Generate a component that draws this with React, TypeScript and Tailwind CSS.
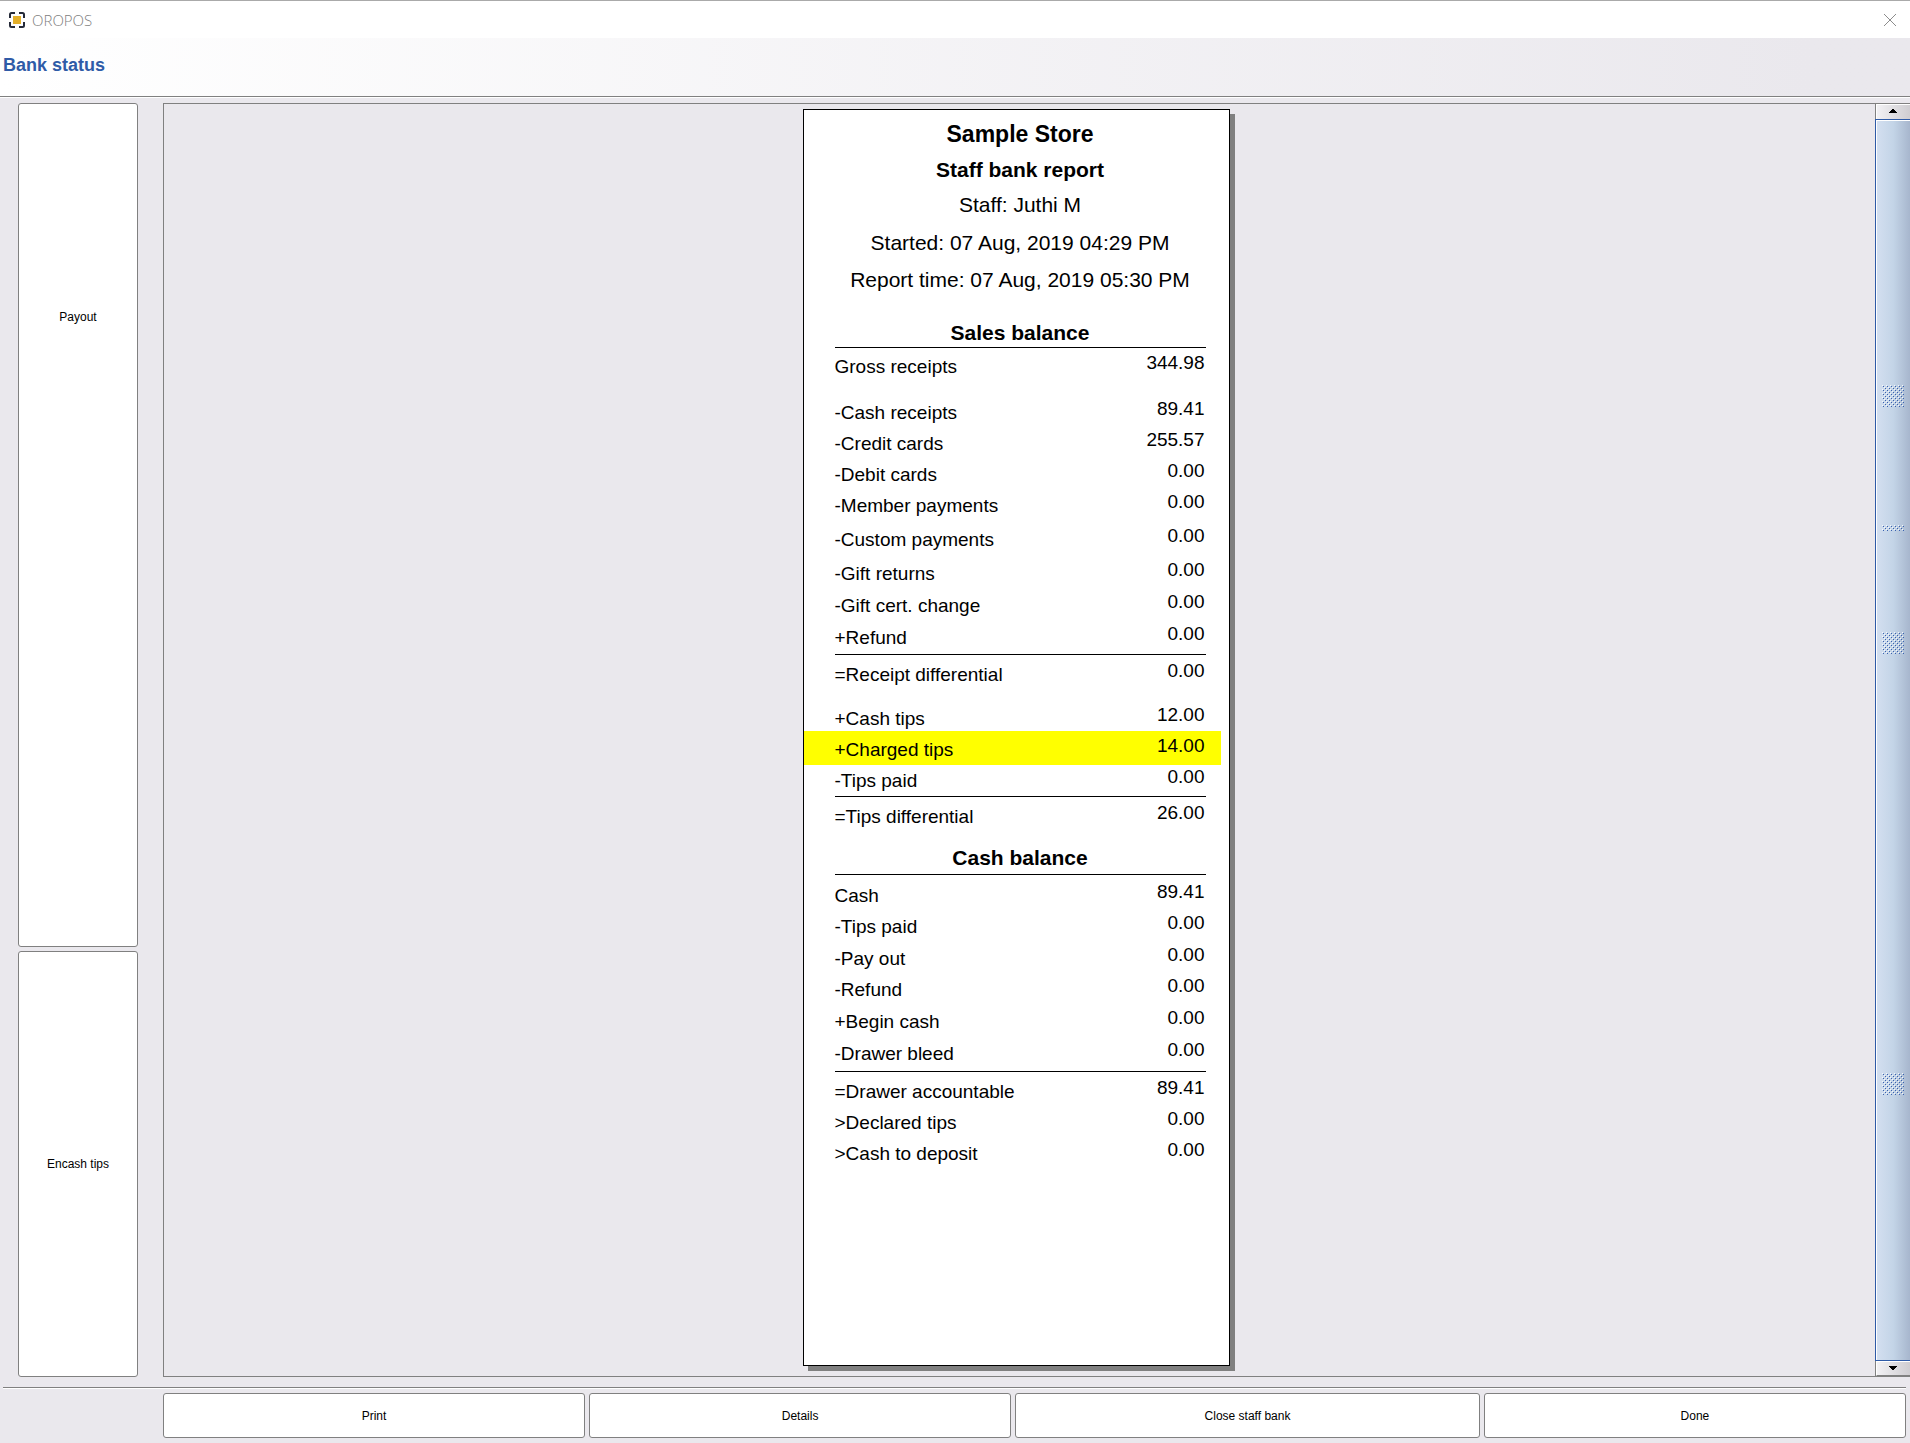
import React from 'react';
import clsx from 'clsx';

type Row = {
  label: string;
  amount: string;
  height?: string;
  highlight?: boolean;
};

const RECEIPT_ROWS: Row[] = [
  { label: 'Gross receipts', amount: '344.98' },
  { label: '-Cash receipts', amount: '89.41', height: 'h-[46px]' },
  { label: '-Credit cards', amount: '255.57' },
  { label: '-Debit cards', amount: '0.00' },
  { label: '-Member payments', amount: '0.00' },
  { label: '-Custom payments', amount: '0.00', height: 'h-[34px]' },
  { label: '-Gift returns', amount: '0.00', height: 'h-[34px]' },
  { label: '-Gift cert. change', amount: '0.00', height: 'h-8' },
  { label: '+Refund', amount: '0.00', height: 'h-8' },
];

const TIP_ROWS: Row[] = [
  { label: '+Cash tips', amount: '12.00' },
  { label: '+Charged tips', amount: '14.00', height: 'h-[34px]', highlight: true },
  { label: '-Tips paid', amount: '0.00', height: 'h-7' },
];

const CASH_ROWS: Row[] = [
  { label: 'Cash', amount: '89.41' },
  { label: '-Tips paid', amount: '0.00' },
  { label: '-Pay out', amount: '0.00', height: 'h-8' },
  { label: '-Refund', amount: '0.00' },
  { label: '+Begin cash', amount: '0.00', height: 'h-8' },
  { label: '-Drawer bleed', amount: '0.00', height: 'h-8' },
];

const DRAWER_ROWS: Row[] = [
  { label: '=Drawer accountable', amount: '89.41' },
  { label: '>Declared tips', amount: '0.00' },
  { label: '>Cash to deposit', amount: '0.00' },
];

const ReportTable: React.FC<{ rows: Row[]; className?: string }> = ({ rows, className }) => (
  <div className={clsx('pr-2', className)}>
    <table className="w-full border-collapse text-[19px] leading-[21px]">
      <tbody>
        {rows.map((row) => (
          <tr
            key={row.label}
            className={clsx(row.height ?? 'h-[31px]', row.highlight && 'bg-[#ffff00]')}
          >
            <th
              scope="row"
              className={clsx(
                'p-0 pl-[31px] text-left align-bottom font-normal',
                row.highlight ? 'pb-[5px]' : 'pb-0.5'
              )}
            >
              {row.label}
            </th>
            <td
              className={clsx(
                'p-0 pr-4 text-right align-bottom',
                row.highlight ? 'pb-[9px]' : 'pb-1.5'
              )}
            >
              {row.amount}
            </td>
          </tr>
        ))}
      </tbody>
    </table>
  </div>
);

const Rule: React.FC<{ className?: string }> = ({ className }) => (
  <hr className={clsx('mr-[23px] ml-[31px] border-0 border-t border-black', className)} />
);

const EtchedLine: React.FC<{ className?: string }> = ({ className }) => (
  <hr className={clsx('h-0.5 shrink-0 border-y border-t-[#808080] border-b-white', className)} />
);

const Grip: React.FC<{ height: number; id: string }> = ({ height, id }) => (
  <svg width="22" height={height} shapeRendering="crispEdges" className="block shrink-0" aria-hidden="true">
    <defs>
      <pattern id={id} width="4" height="4" patternUnits="userSpaceOnUse">
        <rect x="0" y="0" width="1" height="1" fill="#f4f8fc" />
        <rect x="2" y="2" width="1" height="1" fill="#f4f8fc" />
        <rect x="1" y="1" width="1" height="1" fill="#3a62b0" />
        <rect x="3" y="3" width="1" height="1" fill="#3a62b0" />
      </pattern>
    </defs>
    <rect width="22" height={height} fill={`url(#${id})`} />
  </svg>
);

const ScrollBar = () => (
  <div className="flex w-[35px] shrink-0 flex-col border-l border-[#808080]">
    <button
      type="button"
      aria-label="Scroll up"
      className="flex h-[15px] shrink-0 items-center justify-center border-t border-l border-white bg-linear-to-r from-[#f2f1f4] to-[#cfcdd1] pr-0.5 pb-0.5"
    >
      <svg width="8" height="4" shapeRendering="crispEdges" aria-hidden="true">
        <path d="M3 0h2v1h1v1h1v1h1v1H0V3h1V2h1V1h1z" />
      </svg>
    </button>
    <div className="-ml-px flex min-h-0 flex-1 flex-col border-y border-l border-[#2f5ba7]">
      <div className="flex flex-1 flex-col items-start border-t border-l border-white bg-linear-to-r from-[#d3dff0] via-[#c3d4e7] to-[#a7b6cd] pl-[5px]">
        <div className="flex-[264]" />
        <Grip id="grip-a" height={22} />
        <div className="flex-[118]" />
        <Grip id="grip-b" height={6} />
        <div className="flex-[101]" />
        <Grip id="grip-c" height={22} />
        <div className="flex-[419]" />
        <Grip id="grip-d" height={22} />
        <div className="flex-[265]" />
      </div>
    </div>
    <button
      type="button"
      aria-label="Scroll down"
      className="flex h-[15px] shrink-0 items-center justify-center border-t border-b border-l border-white border-b-[#808080] bg-linear-to-r from-[#f2f1f4] to-[#cfcdd1] pr-0.5 pb-0.5"
    >
      <svg width="8" height="4" shapeRendering="crispEdges" aria-hidden="true">
        <path d="M0 0h8v1H7v1H6v1H5v1H3V3H2V2H1V1H0z" />
      </svg>
    </button>
  </div>
);

const Receipt = () => (
  <article className="mt-[5px] mr-[7px] mb-[10px] w-[427px] border border-black bg-white text-black shadow-[5px_5px_0_#808080]">
    <header className="pt-[7px] pl-2 text-center text-[21px] leading-[35px]">
      <h2 className="text-[23px] leading-[35px] font-bold">Sample Store</h2>
      <h3 className="font-bold">Staff bank report</h3>
      <p>Staff: Juthi M</p>
      <div className="mt-0.5 leading-[37px]">
        <p>Started: 07 Aug, 2019 04:29 PM</p>
        <p>Report time: 07 Aug, 2019 05:30 PM</p>
      </div>
    </header>

    {/* Sales */}
    <h3 className="mt-[21px] pl-2 text-center text-[21px] leading-7 font-bold">Sales balance</h3>
    <Rule />
    <ReportTable rows={RECEIPT_ROWS} />
    <Rule className="mt-1 mb-px" />
    <ReportTable rows={[{ label: '=Receipt differential', amount: '0.00' }]} />
    <ReportTable rows={TIP_ROWS} className="mt-[13px]" />
    <Rule className="mt-[3px] mb-px" />
    <ReportTable rows={[{ label: '=Tips differential', amount: '26.00' }]} />

    {/* Cash */}
    <h3 className="mt-[15px] pl-2 text-center text-[21px] leading-7 font-bold">Cash balance</h3>
    <Rule className="my-0.5" />
    <ReportTable rows={CASH_ROWS} />
    <Rule className="mt-[5px] mb-px" />
    <ReportTable rows={DRAWER_ROWS} />
  </article>
);

const buttonClass = 'rounded-[3px] border border-[#808080] bg-white text-xs text-black';

export default function App() {
  return (
    <div className="flex min-h-screen flex-col bg-[#eae8ed] font-['Liberation_Sans',Arial,sans-serif]">
      {/* Title bar */}
      <div className="flex h-[38px] shrink-0 items-center justify-between border-t border-[#aaaaaa] bg-white pr-3.5 pl-[9px]">
        <div className="flex items-center gap-[7px]">
          <svg width="16" height="16" viewBox="0 0 16 16" aria-hidden="true">
            <g fill="none" stroke="#252a38" strokeWidth="2">
              <path d="M1 6V2.5Q1 1 2.5 1H6M10 1h3.5Q15 1 15 2.5V6M15 10v3.5q0 1.500-1.500 1.500H10M6 15H2.500Q1 15 1 13.500V10" />
            </g>
            <rect x="4" y="4" width="8" height="8" fill="#e4b02a" />
          </svg>
          <span className="font-['Open_Sans',sans-serif] text-[15px] leading-5 font-light text-[#808080]">OROPOS</span>
        </div>
        <button type="button" aria-label="Close" className="block">
          <svg width="12" height="12" viewBox="0 0 12 12" aria-hidden="true">
            <path d="M0 0l12 12M12 0L0 12" stroke="#8c8c8c" fill="none" />
          </svg>
        </button>
      </div>

      <div className="flex h-[58px] shrink-0 items-center bg-linear-to-r from-white to-[#eae8ed] to-95% pb-1 pl-[3px]">
        <h1 className="text-lg leading-6 font-bold text-[#2f5ba7]">Bank status</h1>
      </div>
      <EtchedLine />

      <main className="flex flex-1 gap-[25px] pt-[5px] pb-[10px] pl-[18px]">
        <div className="flex w-[120px] shrink-0 flex-col gap-1">
          <button type="button" className={clsx(buttonClass, 'flex flex-[845] flex-col')}>
            <span className="flex h-1/2 w-full items-center justify-center pt-1">Payout</span>
          </button>
          <button type="button" className={clsx(buttonClass, 'flex-[425]')}>
            Encash tips
          </button>
        </div>
        <section className="flex min-w-0 flex-1 border-y border-l border-[#808080]">
          <div className="flex flex-1 justify-center">
            <Receipt />
          </div>
          <ScrollBar />
        </section>
      </main>

      <EtchedLine className="mr-1 ml-[3px]" />
      <footer className="flex gap-1 pt-1 pr-1 pb-[5px] pl-[163px]">
        <button type="button" className={clsx(buttonClass, 'h-[45px] flex-[422]')}>
          Print
        </button>
        <button type="button" className={clsx(buttonClass, 'h-[45px] flex-[422]')}>
          Details
        </button>
        <button type="button" className={clsx(buttonClass, 'h-[45px] flex-[465]')}>
          Close staff bank
        </button>
        <button type="button" className={clsx(buttonClass, 'h-[45px] flex-[422]')}>
          Done
        </button>
      </footer>
    </div>
  );
}
